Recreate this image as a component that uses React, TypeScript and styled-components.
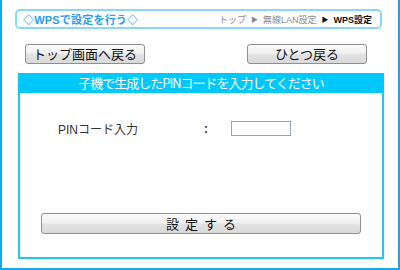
import React from "react";
import styled, { createGlobalStyle } from "styled-components";

const GlobalStyle = createGlobalStyle`
  body {
    margin: 0;
    background: #ffffff;
    font-family: "Liberation Sans", "Noto Sans CJK JP", sans-serif;
  }
`;

const Frame = styled.div`
  width: 400px;
  height: 270px;
  box-sizing: border-box;
  border: 2px solid #1ba6ea;
  border-top: none;
  background: #ffffff;
  padding: 9px 16px 0 13px;
`;

const TitleBar = styled.div`
  height: 20px;
  box-sizing: border-box;
  border: 2px solid #8ad7fa;
  border-radius: 5px;
  display: flex;
  align-items: center;
  justify-content: space-between;
  padding: 0 8px 0 6px;
`;

const Title = styled.span`
  font-size: 11px;
  font-weight: bold;
  color: #2d9cf0;
  letter-spacing: 0.2px;
`;

const Crumbs = styled.span`
  font-size: 9px;
  color: #8a8a8a;
  display: flex;
  gap: 5px;
  align-items: center;
`;

const Crumb = styled.span<{ $current?: boolean }>`
  color: ${(p) => (p.$current ? "#111111" : "#8a8a8a")};
  font-weight: ${(p) => (p.$current ? "bold" : "normal")};
`;

const Arrow = styled.span<{ $dark?: boolean }>`
  font-size: 7px;
  color: ${(p) => (p.$dark ? "#111111" : "#8a8a8a")};
`;

const NavRow = styled.div`
  display: flex;
  justify-content: space-between;
  margin-top: 15px;
  padding: 0 15px 0 10px;
`;

const GrayButton = styled.button<{ $wide?: boolean; $spaced?: boolean }>`
  width: ${(p) => (p.$wide ? "320px" : "120px")};
  height: ${(p) => (p.$wide ? "21px" : "20px")};
  box-sizing: border-box;
  border: 1px solid #8f8f8f;
  border-radius: 3px;
  background: linear-gradient(#fbfbfb 0%, #f0f0f0 45%, #e2e2e2 55%, #d9d9d9 100%);
  font-family: "Noto Sans CJK JP", sans-serif;
  font-size: 13px;
  color: #111111;
  padding: 0;
  line-height: 18px;
  letter-spacing: ${(p) => (p.$spaced ? "6px" : "0")};
  text-indent: ${(p) => (p.$spaced ? "6px" : "0")};
  cursor: pointer;
`;

const Panel = styled.div`
  margin: 9px 0 0 3px;
  width: 366px;
  height: 186px;
  box-sizing: border-box;
  border: 2px solid #1ec6f6;
  display: flex;
  flex-direction: column;
`;

const PanelHeader = styled.div`
  height: 18px;
  background: #00c8fb;
  color: #ffffff;
  font-family: "Noto Sans CJK JP", sans-serif;
  font-size: 13px;
  letter-spacing: -1px;
  line-height: 16px;
  text-align: center;
  margin: -2px -2px 0;
  padding-top: 2px;
`;

const PanelBody = styled.div`
  flex: 1;
  display: flex;
  flex-direction: column;
  justify-content: space-between;
  padding: 27px 22px 23px 21px;
`;

const FieldRow = styled.div`
  display: grid;
  grid-template-columns: 146px 27px 60px;
  align-items: center;
  padding-left: 17px;
  font-family: "Liberation Sans", "Noto Sans CJK JP", sans-serif;
  font-size: 12px;
  color: #333333;
`;

const Colon = styled.span`
  font-weight: bold;
  color: #222222;
`;

const PinInput = styled.input`
  width: 60px;
  height: 15px;
  box-sizing: border-box;
  border: 1px solid #8ea7bf;
  padding: 0 2px;
  font-size: 11px;
`;

export default function App() {
  return (
    <>
      <GlobalStyle />
      <Frame>
        <TitleBar>
          <Title>◇WPSで設定を行う◇</Title>
          <Crumbs>
            <Crumb>トップ</Crumb>
            <Arrow>▶</Arrow>
            <Crumb>無線LAN設定</Crumb>
            <Arrow $dark>▶</Arrow>
            <Crumb $current>WPS設定</Crumb>
          </Crumbs>
        </TitleBar>
        <NavRow>
          <GrayButton>トップ画面へ戻る</GrayButton>
          <GrayButton>ひとつ戻る</GrayButton>
        </NavRow>
        <Panel>
          <PanelHeader>子機で生成したPINコードを入力してください</PanelHeader>
          <PanelBody>
            <FieldRow>
              <span>PINコード入力</span>
              <Colon>:</Colon>
              <PinInput type="text" />
            </FieldRow>
            <GrayButton $wide $spaced>設定する</GrayButton>
          </PanelBody>
        </Panel>
      </Frame>
    </>
  );
}
